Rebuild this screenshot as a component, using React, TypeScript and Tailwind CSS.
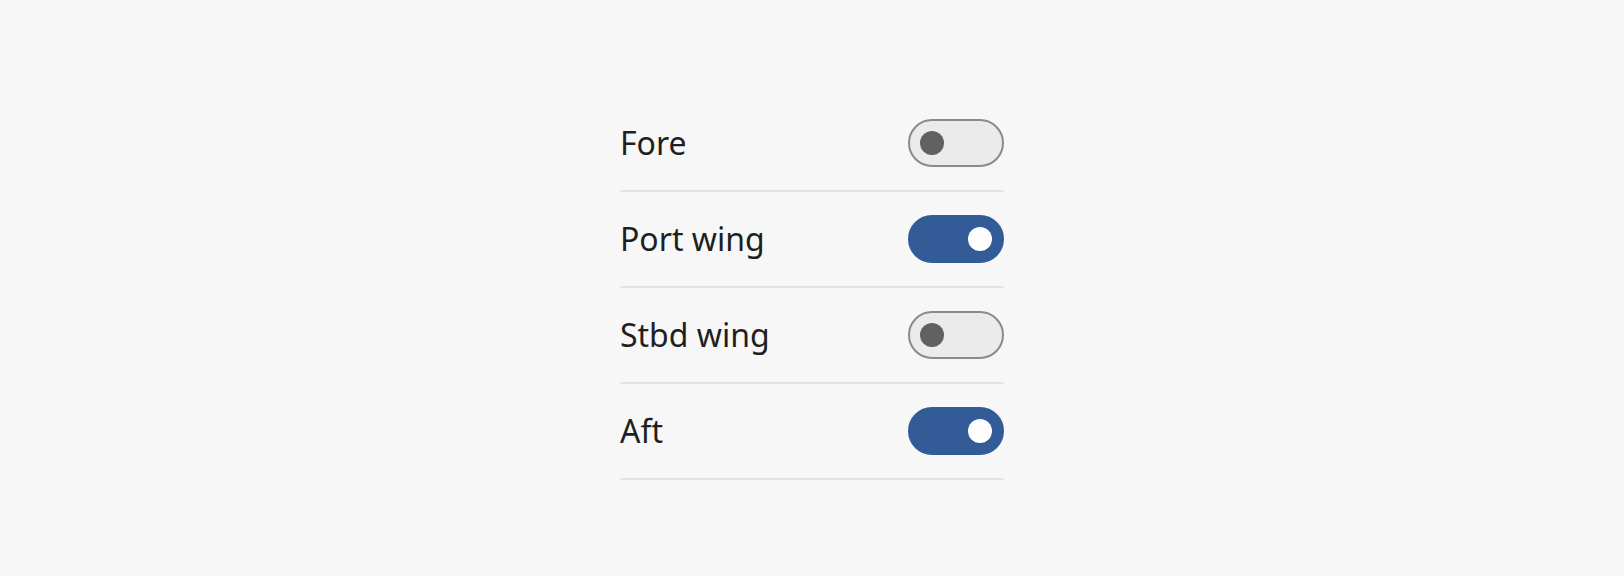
import React, { useState } from "react";

const items = [
  { label: "Fore", on: false },
  { label: "Port wing", on: true },
  { label: "Stbd wing", on: false },
  { label: "Aft", on: true },
];

function Toggle({ on, onClick }: { on: boolean; onClick: () => void }) {
  return (
    <button
      type="button"
      role="switch"
      aria-checked={on}
      onClick={onClick}
      className={
        on
          ? "flex h-[48px] w-[96px] items-center justify-end rounded-full border-2 border-[#325b98] bg-[#325b98] px-[10px]"
          : "flex h-[48px] w-[96px] items-center justify-start rounded-full border-2 border-[#8a8a8a] bg-[#ebebeb] px-[10px]"
      }
    >
      <span
        className={
          on
            ? "block h-[24px] w-[24px] rounded-full bg-white"
            : "block h-[24px] w-[24px] rounded-full bg-[#616161]"
        }
      />
    </button>
  );
}

export default function App() {
  const [state, setState] = useState(items.map((i) => i.on));
  return (
    <div
      className="flex min-h-[576px] w-full items-center justify-center bg-[#f7f7f7]"
      style={{ fontFamily: '"Noto Sans", "Open Sans", sans-serif' }}
    >
      <div className="flex w-[384px] flex-col">
        {items.map((it, idx) => (
          <div
            key={it.label}
            className="flex h-[96px] items-center justify-between border-b-2 border-[#e3e3e3]"
          >
            <span className="text-[32px] leading-none text-[#1f1f1f]">{it.label}</span>
            <Toggle
              on={state[idx]}
              onClick={() =>
                setState((s) => s.map((v, j) => (j === idx ? !v : v)))
              }
            />
          </div>
        ))}
      </div>
    </div>
  );
}
